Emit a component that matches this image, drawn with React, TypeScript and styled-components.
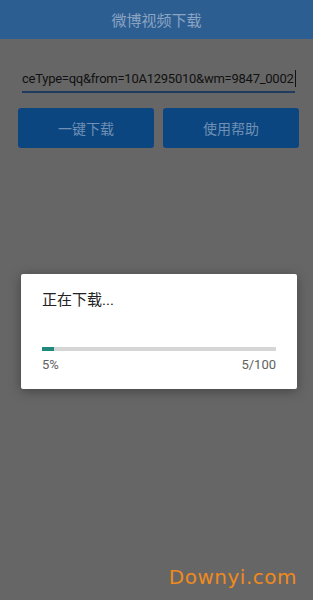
import React from "react";
import styled, { createGlobalStyle } from "styled-components";

const Global = createGlobalStyle`
  html, body {
    margin: 0;
    padding: 0;
    background: #666666;
    font-family: Roboto, "Noto Sans CJK SC", sans-serif;
  }
`;

const Page = styled.div`
  position: relative;
  width: 313px;
  height: 600px;
  background: #666666;
  overflow: hidden;
`;

const Header = styled.div`
  height: 39px;
  background: #2d5e92;
  color: #8aa4c2;
  font-size: 15px;
  display: flex;
  align-items: center;
  justify-content: center;
`;

const Body = styled.div`
  padding: 26px 14px 0 18px;
`;

const Field = styled.div`
  margin: 0 4px 0 4px;
  height: 26px;
  border-bottom: 2px solid #1f3b5e;
  display: flex;
  justify-content: flex-end;
  align-items: center;
  white-space: nowrap;
  font-size: 13px;
  letter-spacing: -0.25px;
  color: #111;
`;

const Caret = styled.span`
  display: inline-block;
  width: 1px;
  height: 17px;
  background: #111;
  margin-left: 1px;
`;

const Buttons = styled.div`
  display: grid;
  grid-template-columns: 1fr 1fr;
  gap: 9px;
  margin-top: 15px;
`;

const Button = styled.div`
  height: 40px;
  border-radius: 3px;
  background: #0b4680;
  color: #7090b5;
  font-size: 14px;
  display: flex;
  align-items: center;
  justify-content: center;
`;

const Dialog = styled.div`
  position: absolute;
  left: 21px;
  top: 274px;
  width: 276px;
  height: 115px;
  background: #ffffff;
  border-radius: 2px;
  box-shadow: 0 2px 12px rgba(0, 0, 0, 0.35);
  box-sizing: border-box;
  padding: 16px 21px 0 21px;
`;

const Title = styled.div`
  font-size: 15px;
  line-height: 20px;
  color: #222;
`;

const Track = styled.div`
  margin-top: 37px;
  height: 4px;
  background: #d6d6d6;
`;

const Fill = styled.div`
  height: 100%;
  background: #1f8a7b;
`;

const Labels = styled.div`
  display: flex;
  justify-content: space-between;
  margin-top: 6px;
  font-size: 13px;
  color: #616161;
`;

const Mark = styled.div`
  position: absolute;
  right: 16px;
  bottom: 11px;
  color: #f08a1c;
  font-family: "DejaVu Sans", sans-serif;
  font-size: 20px;
  letter-spacing: 0.5px;
`;

export default function App() {
  const done = 5;
  const total = 100;
  return (
    <Page>
      <Global />
      <Header>微博视频下载</Header>
      <Body>
        <Field>
          <span>ceType=qq&amp;from=10A1295010&amp;wm=9847_0002</span>
          <Caret />
        </Field>
        <Buttons>
          <Button>一键下载</Button>
          <Button>使用帮助</Button>
        </Buttons>
      </Body>
      <Dialog>
        <Title>正在下载...</Title>
        <Track>
          <Fill style={{ width: `${(done / total) * 100}%` }} />
        </Track>
        <Labels>
          <span>{done}%</span>
          <span>
            {done}/{total}
          </span>
        </Labels>
      </Dialog>
      <Mark>Downyi.com</Mark>
    </Page>
  );
}
